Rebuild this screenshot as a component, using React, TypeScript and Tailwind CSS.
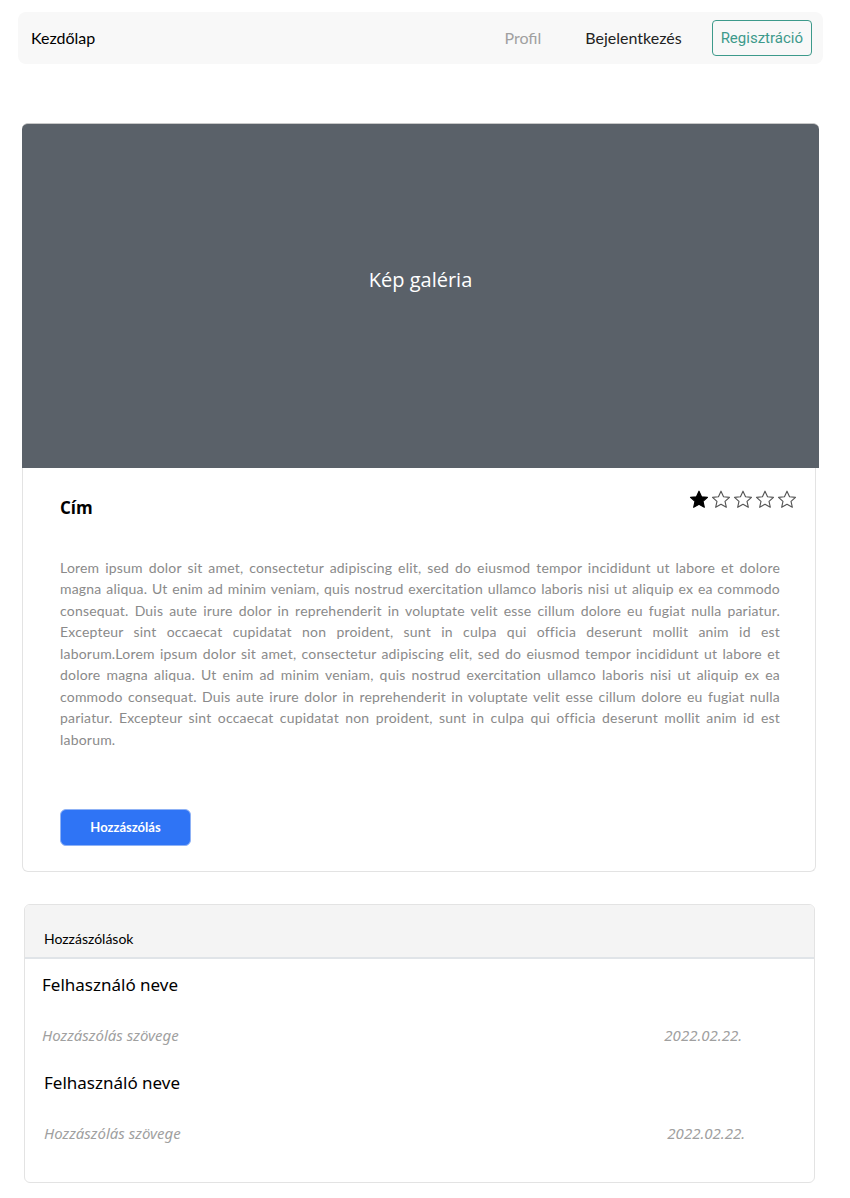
import { useState } from 'react';

const LOREM =
  'Lorem ipsum dolor sit amet, consectetur adipiscing elit, sed do eiusmod tempor incididunt ut labore et dolore magna aliqua. Ut enim ad minim veniam, quis nostrud exercitation ullamco laboris nisi ut aliquip ex ea commodo consequat. Duis aute irure dolor in reprehenderit in voluptate velit esse cillum dolore eu fugiat nulla pariatur. Excepteur sint occaecat cupidatat non proident, sunt in culpa qui officia deserunt mollit anim id est laborum.';

interface Comment {
  id: number;
  user: string;
  text: string;
  date: string;
}

const comments: Comment[] = [
  { id: 1, user: 'Felhasználó neve', text: 'Hozzászólás szövege', date: '2022.02.22.' },
  { id: 2, user: 'Felhasználó neve', text: 'Hozzászólás szövege', date: '2022.02.22.' },
];

function Star({ filled }: { filled: boolean }) {
  return (
    <svg width="22" height="21" viewBox="0 0 24 24" className="shrink-0">
      <path
        d="M12 2.5l2.9 6.3 6.8.7-5.1 4.6 1.5 6.8L12 17.4l-6.1 3.5 1.5-6.8-5.1-4.6 6.8-.7z"
        fill={filled ? '#000' : '#fff'}
        stroke={filled ? '#000' : '#555'}
        strokeWidth="1.3"
        strokeLinejoin="round"
      />
    </svg>
  );
}

export default function App() {
  const [rating] = useState(1);
  const body = LOREM + LOREM;

  return (
    <div className="min-h-screen bg-white font-['Lato',sans-serif] pt-3">
      {/* Navbar */}
      <nav className="mx-[18px] w-[805px] h-[52px] rounded-lg bg-[#f8f8f8] flex items-center pl-[13px] pr-[11px]">
        <a className="text-[16px] text-black">Kezdőlap</a>
        <div className="ml-auto flex items-center">
          <a className="text-[16px] text-[#a0a0a0] mr-[44px]">Profil</a>
          <a className="text-[16px] text-[#222] mr-[30px]">Bejelentkezés</a>
          <button className="h-[36px] px-[8px] rounded border border-[#3d9a8b] text-[#3d9a8b] text-[15px] font-['Roboto',sans-serif]">
            Regisztráció
          </button>
        </div>
      </nav>

      {/* Post card */}
      <div className="ml-[22px] mt-[59px] w-[797px]">
        <div className="h-[345px] bg-[#5a6169] rounded-t-md flex items-center justify-center border-t border-[#c8c8c8]">
          <span className="text-white text-[20px] font-['Open_Sans',sans-serif] -mt-[32px]">Kép galéria</span>
        </div>
        <div className="w-[794px] border border-t-0 border-[#e3e3e3] rounded-b-md pl-[37px] pr-[35px] pt-[21px] pb-[25px]">
          <div className="flex justify-between items-start">
            <h2 className="text-[17px] font-bold text-black mt-[6px] font-['Open_Sans',sans-serif]">Cím</h2>
            <div className="flex -mr-[18px]">
              {[1, 2, 3, 4, 5].map(i => (
                <Star key={i} filled={i <= rating} />
              ))}
            </div>
          </div>
          <p className="mt-[36px] text-[14px] leading-[21.5px] text-[#8a8a8a] text-justify tracking-[0.2px]">
            {body}
          </p>
          <button className="mt-[59px] w-[131px] h-[37px] rounded-md bg-[#2f74f5] text-white text-[13px] font-bold border border-[#8fb2f5]">
            Hozzászólás
          </button>
        </div>
      </div>

      {/* Comments */}
      <div className="ml-[24px] mt-[32px] w-[791px] h-[279px] border border-[#e3e3e3] rounded-md overflow-hidden">
        <div className="h-[54px] bg-[#f4f4f4] border-b-2 border-[#e0e4e8] flex items-end pb-[8px] pl-[19px]">
          <span className="text-[14px] text-black">Hozzászólások</span>
        </div>
        <div className="pt-[13px] pr-[72px] font-['Noto_Sans',sans-serif]">
          {comments.map((c, idx) => (
            <div key={c.id} className={idx === 0 ? 'pl-[17px]' : 'pl-[19px] mt-[24px]'}>
              <p className="text-[17px] text-black">{c.user}</p>
              <div className="flex justify-between mt-[26px]">
                <span className="text-[15px] italic text-[#a0a0a0]">{c.text}</span>
                <span className={`text-[15px] italic text-[#a0a0a0] ${idx === 1 ? '-mr-[3px]' : ''}`}>{c.date}</span>
              </div>
            </div>
          ))}
        </div>
      </div>
    </div>
  );
}
